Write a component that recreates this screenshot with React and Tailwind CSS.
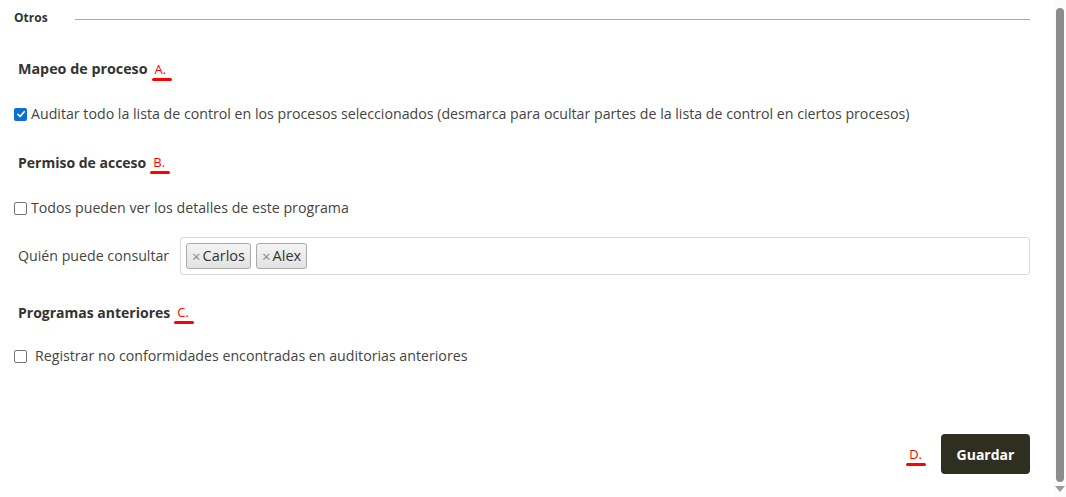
import React from 'react';

const FONT = { fontFamily: '"Open Sans", "Noto Sans", sans-serif' };

// red annotation marker with underline
function Marker({ label }) {
  return (
    <span className="relative ml-[7px] inline-block text-[13px] font-normal leading-none text-[#ff0000]">
      {label}
      <span className="absolute -bottom-[5px] -left-[3px] h-[3px] w-[20px] rounded-full bg-[#ff0000]" />
    </span>
  );
}

function Check({ checked }) {
  return checked ? (
    <span className="inline-flex h-[13px] w-[13px] shrink-0 items-center justify-center rounded-[2px] bg-[#0b6fd6]">
      <svg viewBox="0 0 12 12" className="h-[10px] w-[10px]">
        <path d="M2.2 6.3 L4.9 8.9 L9.9 3.2" fill="none" stroke="white" strokeWidth="1.9" strokeLinecap="round" strokeLinejoin="round" />
      </svg>
    </span>
  ) : (
    <span className="inline-block h-[13px] w-[13px] shrink-0 rounded-[2px] border border-[#767676] bg-white" />
  );
}

function Tag({ name }) {
  return (
    <span className="flex h-[26px] items-center rounded-[3px] border border-[#aaaaaa] bg-gradient-to-b from-[#f4f4f4] to-[#e2e2e2] px-[5px] text-[14.5px] text-[#333]">
      <span className="mr-[2px] text-[15px] leading-none text-[#888]">×</span>
      {name}
    </span>
  );
}

export default function App() {
  return (
    <div className="flex h-[497px] w-[1066px] overflow-hidden bg-white" style={FONT}>
      <div className="flex flex-1 flex-col pl-[14px] pr-[24px]">
        {/* section header */}
        <div className="flex h-[36px] items-center">
          <span className="text-[12px] font-bold text-[#333]">Otros</span>
          <div className="ml-[27px] mt-[3px] h-px flex-1 bg-[#a8a8a8]" />
        </div>

        <div className="mt-[21px] flex h-[24px] items-center pl-[4px] text-[14.3px] font-bold text-[#333]">
          Mapeo de proceso <Marker label="A." />
        </div>

        <label className="mt-[23px] flex h-[20px] items-center gap-[4px] text-[14.2px] text-[#444]">
          <Check checked />
          Auditar todo la lista de control en los procesos seleccionados (desmarca para ocultar partes de la lista de control en ciertos procesos)
        </label>

        <div className="mt-[26px] flex h-[24px] items-center pl-[4px] text-[14px] font-bold text-[#333]">
          Permiso de acceso <Marker label="B." />
        </div>

        <label className="mt-[24px] flex h-[20px] items-center gap-[4px] text-[14.2px] text-[#444]">
          <Check />
          Todos pueden ver los detalles de este programa
        </label>

        <div className="mt-[19px] flex items-center">
          <span className="w-[166px] pl-[4px] text-[14.2px] text-[#444]">Quién puede consultar</span>
          <div className="flex h-[38px] flex-1 items-center gap-[5px] rounded-[3px] border border-[#d9d9d9] px-[5px]">
            <Tag name="Carlos" />
            <Tag name="Alex" />
          </div>
        </div>

        <div className="mt-[25px] flex h-[24px] items-center pl-[4px] text-[14px] font-bold text-[#333]">
          Programas anteriores <Marker label="C." />
        </div>

        <label className="mt-[22px] flex h-[20px] items-center gap-[8px] text-[14.2px] text-[#444]">
          <Check />
          Registrar no conformidades encontradas en auditorias anteriores
        </label>

        <div className="mt-[68px] flex items-center justify-end">
          <Marker label="D." />
          <button className="ml-[19px] h-[40px] w-[89px] rounded-[4px] bg-[#2f2f21] text-[14px] font-bold text-white">
            Guardar
          </button>
        </div>
      </div>

      {/* scrollbar */}
      <div className="flex w-[12px] flex-col items-center bg-[#fbfbfb] pt-[8px]">
        <div className="h-[474px] w-[8px] rounded-full bg-[#8c8c8c]" />
        <svg viewBox="0 0 10 6" className="mt-[4px] h-[6px] w-[10px]">
          <path d="M0 0 L10 0 L5 6 Z" fill="#9a9a9a" />
        </svg>
      </div>
    </div>
  );
}
